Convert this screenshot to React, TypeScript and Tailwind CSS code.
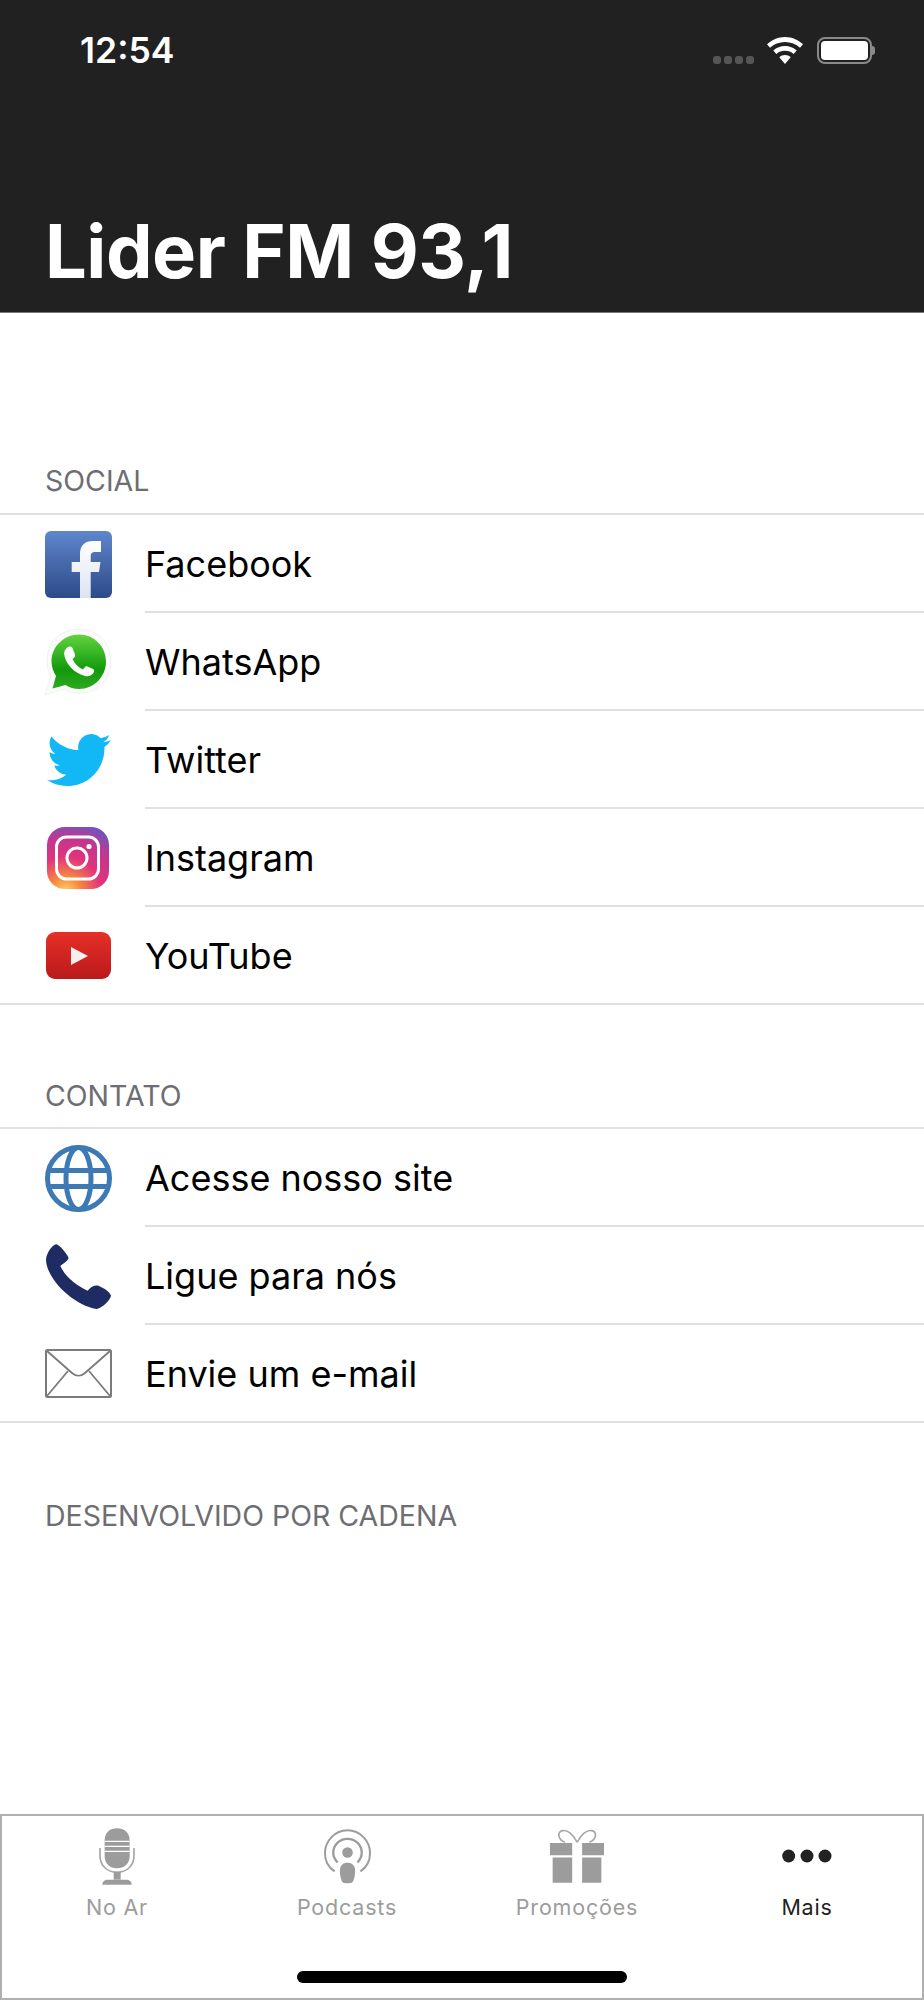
import React from 'react';

const font = { fontFamily: 'Inter, "Noto Sans", sans-serif' };

const Facebook = () => (
  <svg width="67" height="67" viewBox="0 0 67 67">
    <defs>
      <linearGradient id="fbBg" x1="0" y1="0" x2="0" y2="1">
        <stop offset="0" stopColor="#5f86cc" />
        <stop offset="1" stopColor="#2d4a88" />
      </linearGradient>
      <linearGradient id="fbF" x1="0" y1="0" x2="0" y2="1">
        <stop offset="0" stopColor="#ffffff" />
        <stop offset="1" stopColor="#dde3f1" />
      </linearGradient>
    </defs>
    <rect width="67" height="67" rx="6" fill="url(#fbBg)" />
    <path d="M35 67V41H26.7V31H35V23C35 14 40 10 48 10H56V21H50.500C46.500 21 45.700 23 45.700 25V31H55.500L54 41H45.700V67Z" fill="url(#fbF)" />
  </svg>
);

const WhatsApp = () => (
  <svg width="67" height="67" viewBox="0 0 67 67">
    <defs>
      <linearGradient id="waBg" x1="0" y1="0" x2="0" y2="1">
        <stop offset="0" stopColor="#62d33e" />
        <stop offset="0.65" stopColor="#119a0c" />
        <stop offset="1" stopColor="#2fa921" />
      </linearGradient>
    </defs>
    <path d="M34 0C15.500 0 2 14 2 32C2 38 3.500 43 6 47L0 66L19 60C23.500 63 28.500 64.500 34 64.500C52 64.500 66 50 66 32C66 14 52 0 34 0Z" fill="#fbfbfb" stroke="#f1f1f1" />
    <path d="M34 5.500C19 5.500 6.500 17.500 6.500 32.500C6.500 38 8.500 43 11 47L7.500 59.500L20.500 56C24.500 58.500 29 60 34 60C49 60 61 47.500 61 32.500C61 17.500 49 5.500 34 5.500Z" fill="url(#waBg)" />
    <path d="M23 18C20 20 18.500 23 19.500 27C21.500 36 30 44.500 40 47C44 48 47.500 46 49 43C49.500 41.500 49 40.500 48 40L42.500 37.500C41.500 37 40.500 37.300 40 38L38 40.500C33.500 38.500 29.500 34.500 27.500 30L29.500 28C30.200 27.300 30.300 26.500 30 25.500L27.500 19C27 17.500 24.500 17 23 18Z" fill="#ffffff" />
  </svg>
);

const Twitter = () => (
  <svg width="64" height="64" viewBox="0 0 24 24" fill="#12b8f5">
    <path d="M23.953 4.57a10 10 0 01-2.825.775 4.958 4.958 0 002.163-2.723c-.951.555-2.005.959-3.127 1.184a4.92 4.92 0 00-8.384 4.482C7.69 8.095 4.067 6.13 1.64 3.162a4.822 4.822 0 00-.666 2.475c0 1.71.87 3.213 2.188 4.096a4.904 4.904 0 01-2.228-.616v.06a4.923 4.923 0 003.946 4.827 4.996 4.996 0 01-2.212.085 4.936 4.936 0 004.604 3.417 9.867 9.867 0 01-6.102 2.105c-.39 0-.779-.023-1.17-.067a13.995 13.995 0 007.557 2.209c9.053 0 13.998-7.496 13.998-13.985 0-.21 0-.42-.015-.63A9.935 9.935 0 0024 4.59z" />
  </svg>
);

const Instagram = () => (
  <svg width="62" height="62" viewBox="0 0 62 62" className="-ml-[1px]">
    <defs>
      <radialGradient id="igBg" cx="0.3" cy="1.05" r="1.2">
        <stop offset="0" stopColor="#fdd475" />
        <stop offset="0.2" stopColor="#f98a3c" />
        <stop offset="0.48" stopColor="#e0337c" />
        <stop offset="0.72" stopColor="#c3368f" />
        <stop offset="1" stopColor="#5e5ac9" />
      </radialGradient>
    </defs>
    <rect width="62" height="62" rx="18" fill="url(#igBg)" />
    <rect x="9.500" y="10" width="42" height="42" rx="10" fill="none" stroke="#ffffff" strokeWidth="3" />
    <circle cx="30" cy="31" r="10" fill="none" stroke="#ffffff" strokeWidth="3" />
    <circle cx="42" cy="19.500" r="2.600" fill="#ffffff" />
  </svg>
);

const YouTube = () => (
  <svg width="65" height="47" viewBox="0 0 65 47">
    <defs>
      <linearGradient id="ytBg" x1="0" y1="0" x2="0" y2="1">
        <stop offset="0" stopColor="#e72f26" />
        <stop offset="1" stopColor="#b81a1c" />
      </linearGradient>
    </defs>
    <rect width="65" height="47" rx="9" fill="url(#ytBg)" />
    <path d="M25 15V33L42 24Z" fill="#f8eeee" />
  </svg>
);

const Globe = () => (
  <svg width="67" height="67" viewBox="0 0 67 67" fill="none" stroke="#3c79b5" strokeWidth="5">
    <circle cx="33.500" cy="33.500" r="31" />
    <ellipse cx="33.500" cy="33.500" rx="12.500" ry="31" />
    <path d="M5 25.500H62M5 41.500H62" />
  </svg>
);

const Phone = () => (
  <svg width="65" height="65" viewBox="137 372 195 195">
    <path d="M168 373C178 376 195 395 204 412C207 420 190 430 180 438C195 470 225 495 262 512C272 500 285 494 296 498C312 505 328 515 332 527C330 540 305 565 288 567C220 555 140 480 137 420C138 400 155 375 168 373Z" fill="#1f2c63" />
  </svg>
);

const Mail = () => (
  <svg width="67" height="49" viewBox="0 0 67 49" fill="none" stroke="#7b7b7b">
    <rect x="1" y="1" width="65" height="47" rx="1.500" strokeWidth="2" />
    <path d="M2 2L27 24C31 27.500 36 27.500 40 24L65 2" strokeWidth="1.800" />
    <path d="M2 47L23 22M65 47L44 22" strokeWidth="1.800" />
  </svg>
);

const Mic = () => (
  <svg width="36" height="57" viewBox="293 85 108 171">
    <path d="M310 122C310 100 325 86 347 86C369 86 385 100 385 122V170C385 192 369 206 347 206C325 206 310 192 310 170Z" fill="#9c9c9c" />
    <path d="M310 125H385M310 140H385M310 155H385" stroke="#ffffff" strokeWidth="3.500" />
    <path d="M296 145V168C296 198 318 218 347 218C376 218 398 198 398 168V145" fill="none" stroke="#a6a6a6" strokeWidth="5" />
    <rect x="337" y="216" width="21" height="24" fill="#9c9c9c" />
    <path d="M303 255C303 245 310 240 320 240H374C384 240 391 245 391 255Z" fill="#9c9c9c" />
  </svg>
);

const Podcast = () => (
  <svg width="47" height="55" viewBox="970 85 142 166">
    <path d="M1002 213C984 201 973 181 973 158C973 121 1003 89 1041 89C1079 89 1109 121 1109 158C1109 181 1098 201 1080 213" fill="none" stroke="#9c9c9c" strokeWidth="6" />
    <path d="M1011 186C1003 178 998 168 998 157C998 133 1017 115 1041 115C1065 115 1084 133 1084 157C1084 168 1079 178 1071 186" fill="none" stroke="#9c9c9c" strokeWidth="7" />
    <circle cx="1041" cy="156" r="16" fill="#9c9c9c" />
    <path d="M1018 210C1018 195 1028 187 1041 187C1054 187 1064 195 1064 210C1064 228 1060 240 1056 246C1053 250 1029 250 1026 246C1022 240 1018 228 1018 210Z" fill="#9c9c9c" />
  </svg>
);

const Gift = () => (
  <svg width="54" height="54" viewBox="265 88 163 163">
    <path d="M347 128C335 104 318 90 303 93C286 97 288 120 310 128M347 128C359 104 376 90 391 93C408 97 406 120 384 128" fill="none" stroke="#a6a6a6" strokeWidth="5" />
    <path d="M265 130H332V167H265ZM362 130H428V167H362Z" fill="#9c9c9c" />
    <path d="M273 174H332V250H273ZM362 174H420V250H362Z" fill="#9c9c9c" />
  </svg>
);

const Dots = () => (
  <svg width="50" height="14" viewBox="0 0 150 42" fill="#222222">
    <circle cx="20" cy="21" r="19.500" />
    <circle cx="75" cy="21" r="19.500" />
    <circle cx="129" cy="21" r="19.500" />
  </svg>
);

const Wifi = () => (
  <svg width="36" height="27" viewBox="0 0 36 27" fill="#ffffff">
    <path d="M18 0C11 0 5 2.800 0 7.300L3 10.800C7 7.200 12.200 5 18 5C23.800 5 29 7.200 33 10.800L36 7.300C31 2.800 25 0 18 0Z" />
    <path d="M18 9C13.500 9 9.500 10.700 6.300 13.500L9.300 17C11.700 15 14.700 13.800 18 13.800C21.300 13.800 24.300 15 26.700 17L29.700 13.500C26.500 10.700 22.500 9 18 9Z" />
    <path d="M18 18C15.800 18 13.800 18.800 12.300 20.200L18 27L23.700 20.200C22.200 18.800 20.200 18 18 18Z" />
  </svg>
);

const Row = ({ icon, label, last }: { icon: React.ReactNode; label: string; last?: boolean }) => (
  <div className={`flex h-[98px] items-stretch ${last ? 'border-b-2 border-[#e0e0e2]' : ''}`}>
    <div className="flex w-[145px] shrink-0 items-center pl-[45px]">
      <div className="flex w-[67px] items-center justify-center">{icon}</div>
    </div>
    <div className={`flex flex-1 items-center pt-[2px] text-[36px] text-black ${last ? '' : 'border-b-2 border-[#e0e0e2]'}`}>
      {label}
    </div>
  </div>
);

const Label = ({ children }: { children: React.ReactNode }) => (
  <div className="pl-[45px] text-[28.500px] leading-[32px] text-[#6d6d72]">{children}</div>
);

const Tab = ({ icon, label, active }: { icon: React.ReactNode; label: string; active?: boolean }) => (
  <div className="flex flex-1 flex-col items-center">
    <div className="flex h-[58px] items-center justify-center">{icon}</div>
    <div className={`mt-[8px] text-[21.500px] leading-[28px] tracking-[0.8px] ${active ? 'text-[#222222]' : 'text-[#9c9c9c]'}`}>
      {label}
    </div>
  </div>
);

export default function App() {
  return (
    <div className="flex h-[2000px] w-[924px] flex-col overflow-hidden bg-white" style={font}>
      <header className="flex h-[313px] shrink-0 flex-col border-b border-[#777777] bg-[#212121] text-white">
        <div className="flex items-start justify-between pl-[80px] pr-[49px] pt-[30px]">
          <span className="text-[35.500px] font-semibold leading-[41px]">12:54</span>
          <div className="mt-[7px] flex items-start">
            <div className="mt-[19px] flex gap-[3px]">
              <span className="h-[8px] w-[8px] rounded-[3px] bg-[#555555]" />
              <span className="h-[8px] w-[8px] rounded-[3px] bg-[#555555]" />
              <span className="h-[8px] w-[8px] rounded-[3px] bg-[#555555]" />
              <span className="h-[8px] w-[8px] rounded-[3px] bg-[#555555]" />
            </div>
            <div className="ml-[13px]"><Wifi /></div>
            <div className="ml-[14px] flex items-center">
              <div className="h-[27px] w-[55px] rounded-[8px] border-2 border-[#8a8a8a] p-[2px]">
                <div className="h-full w-full rounded-[4px] bg-white" />
              </div>
              <div className="h-[9px] w-[3px] rounded-r-full bg-[#8a8a8a]" />
            </div>
          </div>
        </div>
        <h1 className="mt-auto pb-[16px] pl-[45px] text-[74px] font-bold leading-[90px] tracking-[-0.5px]">Lider FM 93,1</h1>
      </header>

      <main className="flex flex-1 flex-col">
        <div className="pt-[152px]"><Label>SOCIAL</Label></div>
        <div className="mt-[16px] border-t-2 border-[#e0e0e2]">
          <Row icon={<Facebook />} label="Facebook" />
          <Row icon={<WhatsApp />} label="WhatsApp" />
          <Row icon={<Twitter />} label="Twitter" />
          <Row icon={<Instagram />} label="Instagram" />
          <Row icon={<YouTube />} label="YouTube" last />
        </div>
        <div className="pt-[75px]"><Label>CONTATO</Label></div>
        <div className="mt-[15px] border-t-2 border-[#e0e0e2]">
          <Row icon={<Globe />} label="Acesse nosso site" />
          <Row icon={<Phone />} label="Ligue para nós" />
          <Row icon={<Mail />} label="Envie um e-mail" last />
        </div>
        <div className="pt-[77px]"><Label>DESENVOLVIDO POR CADENA</Label></div>
      </main>

      <nav className="relative flex h-[186px] shrink-0 border-2 border-[#b0b0b0] pt-[11px]">
        <Tab icon={<Mic />} label="No Ar" />
        <Tab icon={<Podcast />} label="Podcasts" />
        <Tab icon={<Gift />} label="Promoções" />
        <Tab icon={<Dots />} label="Mais" active />
        <div className="absolute bottom-[15px] left-[295px] h-[12px] w-[330px] rounded-full bg-black" />
      </nav>
    </div>
  );
}
